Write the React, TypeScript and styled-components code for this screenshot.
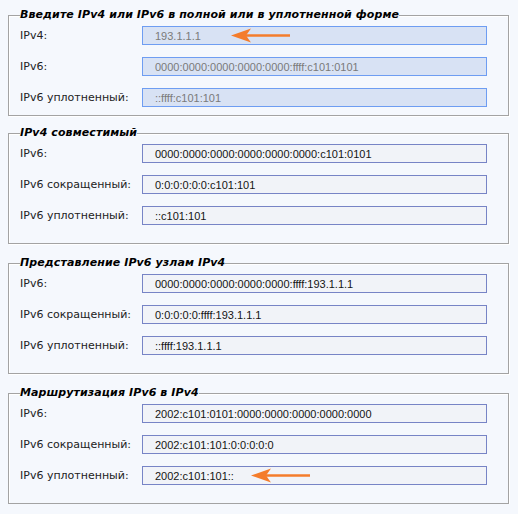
import React from "react";
import styled, { createGlobalStyle } from "styled-components";

const Global = createGlobalStyle`
  html, body { margin: 0; padding: 0; background: #f5f8fd; }
  body { padding: 8px 0 0 8px; font-family: Verdana, "DejaVu Sans", sans-serif; }
`;

const Page = styled.div`
  width: 501px;
  display: flex;
  flex-direction: column;
`;

const Group = styled.fieldset<{ $compact?: boolean; $gap: number }>`
  box-sizing: border-box;
  margin: 0 0 ${(p) => p.$gap}px 0;
  padding: 4px 20px ${(p) => (p.$compact ? 8 : 18)}px 11px;
  border: 1px solid #a3a3a3;
  box-shadow: inset 1px 1px 0 #ffffff, 1px 1px 0 #ffffff;
  display: flex;
  flex-direction: column;
  gap: 12px;
  min-width: 0;
`;

const Legend = styled.legend`
  padding: 0;
  margin-left: 0;
  font-family: Verdana, "DejaVu Sans", sans-serif;
  font-size: 11px;
  font-weight: bold;
  font-style: italic;
  letter-spacing: 0.1px;
  color: #000;
  line-height: 14px;
  height: 14px;
`;

const Row = styled.div`
  display: grid;
  grid-template-columns: 122px 345px;
  align-items: center;
  height: 19px;
`;

const Label = styled.span`
  font-family: Verdana, "DejaVu Sans", sans-serif;
  font-size: 11px;
  color: #222;
  white-space: nowrap;
`;

const Field = styled.div<{ $primary?: boolean }>`
  position: relative;
  box-sizing: border-box;
  height: 19px;
  padding-left: 12px;
  display: flex;
  align-items: center;
  background: ${(p) => (p.$primary ? "#d8e2f4" : "#f1f3f8")};
  border: 1px solid ${(p) => (p.$primary ? "#6e9df2" : "#7784c6")};
  font-family: "Liberation Sans", Arial, sans-serif;
  font-size: 11px;
  color: ${(p) => (p.$primary ? "#7a7a7a" : "#141414")};
  white-space: nowrap;
`;

const ArrowMark = styled.svg<{ $left: number }>`
  position: absolute;
  left: ${(p) => p.$left}px;
  top: 1px;
  width: 60px;
  height: 15px;
  overflow: visible;
`;

const Arrow = ({ left }: { left: number }) => (
  <ArrowMark $left={left} viewBox="0 0 60 15">
    <line x1="12" y1="7.5" x2="59" y2="7.5" stroke="#f47c2c" strokeWidth="2.6" />
    <path d="M0 7.5 L20 0.5 L15 7.5 L20 14.5 Z" fill="#f47c2c" />
  </ArrowMark>
);

type RowData = { label: string; value: string; arrow?: number };

const groups: { title: string; primary?: boolean; rows: RowData[]; gap: number }[] = [
  {
    title: "Введите IPv4 или IPv6 в полной или в уплотненной форме",
    primary: true,
    gap: 10,
    rows: [
      { label: "IPv4:", value: "193.1.1.1", arrow: 88 },
      { label: "IPv6:", value: "0000:0000:0000:0000:0000:ffff:c101:0101" },
      { label: "IPv6 уплотненный:", value: "::ffff:c101:101" },
    ],
  },
  {
    title: "IPv4 совместимый",
    gap: 12,
    rows: [
      { label: "IPv6:", value: "0000:0000:0000:0000:0000:0000:c101:0101" },
      { label: "IPv6 сокращенный:", value: "0:0:0:0:0:0:c101:101" },
      { label: "IPv6 уплотненный:", value: "::c101:101" },
    ],
  },
  {
    title: "Представление IPv6 узлам IPv4",
    gap: 12,
    rows: [
      { label: "IPv6:", value: "0000:0000:0000:0000:0000:ffff:193.1.1.1" },
      { label: "IPv6 сокращенный:", value: "0:0:0:0:0:ffff:193.1.1.1" },
      { label: "IPv6 уплотненный:", value: "::ffff:193.1.1.1" },
    ],
  },
  {
    title: "Маршрутизация IPv6 в IPv4",
    gap: 0,
    rows: [
      { label: "IPv6:", value: "2002:c101:0101:0000:0000:0000:0000:0000" },
      { label: "IPv6 сокращенный:", value: "2002:c101:101:0:0:0:0:0" },
      { label: "IPv6 уплотненный:", value: "2002:c101:101::", arrow: 108 },
    ],
  },
];

export default function App() {
  return (
    <Page>
      <Global />
      {groups.map((g) => (
        <Group key={g.title} $compact={g.primary} $gap={g.gap}>
          <Legend>{g.title}</Legend>
          {g.rows.map((r) => (
            <Row key={r.label}>
              <Label>{r.label}</Label>
              <Field $primary={g.primary}>
                {r.value}
                {r.arrow !== undefined && <Arrow left={r.arrow} />}
              </Field>
            </Row>
          ))}
        </Group>
      ))}
    </Page>
  );
}
